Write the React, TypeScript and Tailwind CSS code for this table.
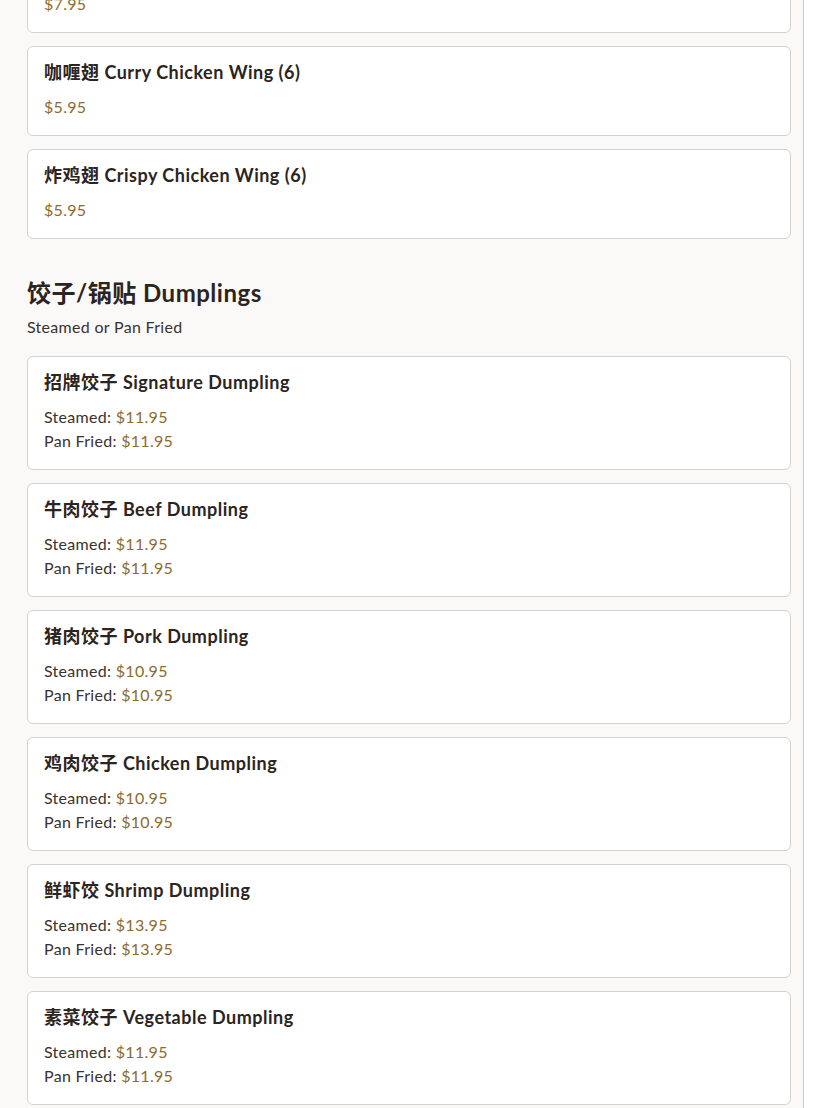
import React from 'react'

type Item = { zh: string; en: string; price?: string; steamed?: string; fried?: string }

const wings: Item[] = [
  { zh: '炸鸡柳', en: 'Chicken Tenders (5)', price: '$7.95' },
  { zh: '咖喱翅', en: 'Curry Chicken Wing (6)', price: '$5.95' },
  { zh: '炸鸡翅', en: 'Crispy Chicken Wing (6)', price: '$5.95' },
]

const dumplings: Item[] = [
  { zh: '招牌饺子', en: 'Signature Dumpling', steamed: '$11.95', fried: '$11.95' },
  { zh: '牛肉饺子', en: 'Beef Dumpling', steamed: '$11.95', fried: '$11.95' },
  { zh: '猪肉饺子', en: 'Pork Dumpling', steamed: '$10.95', fried: '$10.95' },
  { zh: '鸡肉饺子', en: 'Chicken Dumpling', steamed: '$10.95', fried: '$10.95' },
  { zh: '鲜虾饺', en: 'Shrimp Dumpling', steamed: '$13.95', fried: '$13.95' },
  { zh: '素菜饺子', en: 'Vegetable Dumpling', steamed: '$11.95', fried: '$11.95' },
]

const Card = ({ item }: { item: Item }) => (
  <div className="bg-white border border-[#d4d2cf] rounded-md px-4 py-4">
    <h3 className="text-[18px] leading-[18px] font-bold tracking-[0.5px] text-[#2b2420]">
      {item.zh} {item.en}
    </h3>
    <div className="mt-[14px] text-[16px] leading-6 tracking-[0.3px]">
      {item.price ? (
        <p className="text-[#8b6b2e]">{item.price}</p>
      ) : (
        <>
          <p className="text-[#3a322d]">
            Steamed: <span className="text-[#8b6b2e]">{item.steamed}</span>
          </p>
          <p className="text-[#3a322d]">
            Pan Fried: <span className="text-[#8b6b2e]">{item.fried}</span>
          </p>
        </>
      )}
    </div>
  </div>
)

export default function App() {
  return (
    <div
      className="bg-white min-h-screen overflow-hidden"
      style={{ fontFamily: 'Lato, "Noto Sans CJK SC", sans-serif' }}
    >
      <div className="w-[804px] min-h-screen bg-[#faf9f7] border-r border-[#cfcdca] pl-[27px] pr-[12px]">
        <div className="-mt-[57px] flex flex-col gap-[13px]">
          {wings.map((w) => (
            <Card key={w.en} item={w} />
          ))}
        </div>

        <section className="mt-[39px] pb-10">
          <h2 className="text-[24px] leading-[29px] font-bold tracking-[0.5px] text-[#2b2420]">
            饺子/锅贴 Dumplings
          </h2>
          <p className="mt-2 text-[16px] leading-6 tracking-[0.3px] text-[#3a322d]">Steamed or Pan Fried</p>
          <div className="mt-[17px] flex flex-col gap-[13px]">
            {dumplings.map((d) => (
              <Card key={d.en} item={d} />
            ))}
          </div>
        </section>
      </div>
    </div>
  )
}
